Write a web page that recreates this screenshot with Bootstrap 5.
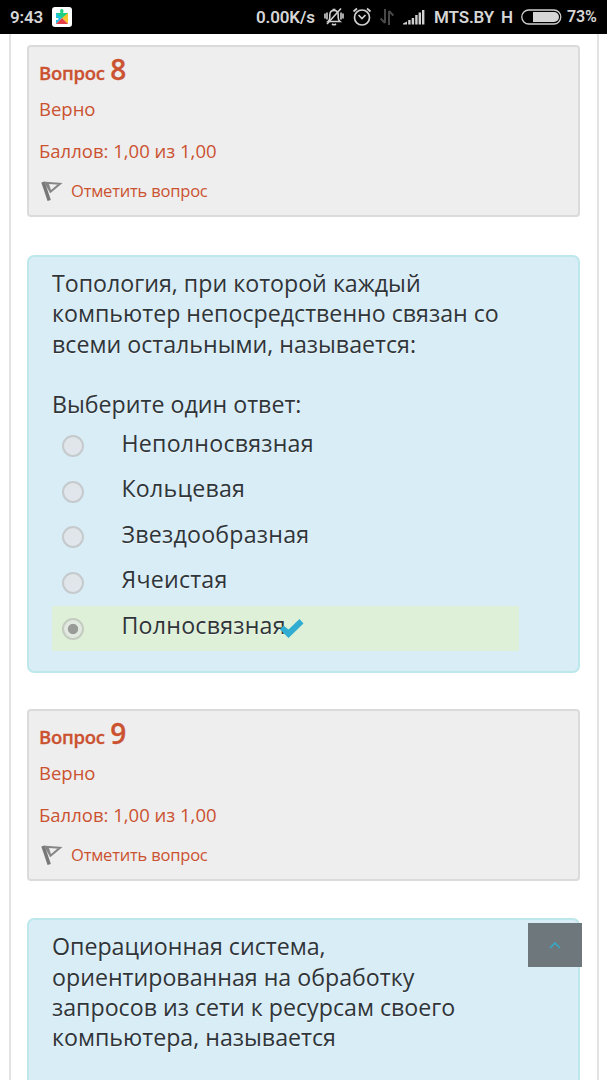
<!DOCTYPE html>
<html lang="ru">
<head>
<meta charset="utf-8">
<meta name="viewport" content="width=device-width, initial-scale=1">
<title>Тест</title>
<link href="https://cdn.jsdelivr.net/npm/bootstrap@5.3.0/dist/css/bootstrap.min.css" rel="stylesheet">
<style>
body{font-family:"Open Sans","Noto Sans",sans-serif;color:#2f3538;background:#fff;height:1080px;overflow:hidden}
.status{height:33.5px;background:#000;color:#d6d6d6;font:600 17px/34px Roboto,sans-serif;letter-spacing:-.15px;padding:0 10px}
.status span,.status svg{display:block;flex:none;white-space:nowrap}
.frame{margin:0 8px 0 9px;border:solid #e3e3e3;border-width:0 2px;padding:11.5px 17px 0 16px;height:1047px;overflow:hidden}
.info{height:172px;border:2px solid #dbdbdb;border-radius:4px;background:#eee;color:#cb5230;padding:0 10px;margin-bottom:37.5px}
.info p{margin:0;white-space:nowrap}
.num{font-weight:600;font-size:18.5px;letter-spacing:-.25px;line-height:48px;height:47.2px;padding-top:2px;-webkit-text-stroke:.3px}
.num b{font-size:28px;font-weight:600;letter-spacing:0;line-height:1;margin-left:1px}
.state{font-size:18.5px;line-height:30px}
.pts{font-size:18.5px;line-height:30px;margin-top:12px!important}
.flag{font-size:16.5px;letter-spacing:-.2px;line-height:26px;margin-top:12px!important}
.quest{border:2px solid #bce8ec;border-radius:7px;background:#d9edf7;padding:11.2px 23px 20px;font-size:23.2px;line-height:30.4px;height:418.5px;margin-bottom:35.500px;text-shadow:0 1px 0 rgba(255,255,255,.5)}
.quest p{margin:0 0 30.4px;white-space:nowrap}
.answers{width:467px;margin-top:3.8px}
.answer{height:45.6px;padding-left:10px}
.answer.right{background:#dff0d8}
.answer span{margin-left:37.5px;line-height:39.800px;height:45.6px;letter-spacing:.22px}
.answer input{appearance:none;flex:none;width:22px;height:22px;border:2px solid #c5cacd;border-radius:50%;background:linear-gradient(#dfe5e9,#e2e6ed);margin:0}
.answer input:checked{background:radial-gradient(circle,#989b98 0 4.7px,#e2e9e0 5.6px);border-color:#c4cbc1}
.check{margin-left:-6px}
.totop{position:fixed;left:528px;top:923px;width:54px;height:44px;background:#6e777b}
</style>
</head>
<body>
<header class="status d-flex align-items-center">
  <span id="clock" style="width:42px">9:43</span>
  <svg width="20" height="20" viewBox="0 0 20 20"><rect width="20" height="20" rx="3" fill="#fff"/><path d="M4 6h4.500L8 4.200q0-2.200 1.800-2.200t1.800 2.200L11 6h5v5H4z" fill="#1ed083"/><path d="M4 6l6 5-6 6v-4q2.500.3 2.500-1.500T4 10z" fill="#22bfe8"/><path d="M16 6l-6 5 6 6z" fill="#f8c52b"/><path d="M10 11l6 6H4z" fill="#e63e45"/></svg>
  <span id="speed" style="margin-left:184px;width:68px">0.00K/s</span>
  <svg width="20" height="20" viewBox="0 0 20 20" fill="none" stroke="#d0d0d0" stroke-width="1.600"><path d="M4 14.500h12q-1.800-1.500-1.800-4V8q0-4.500-4.200-4.500T5.800 8v2.500q0 2.500-1.800 4z"/><path d="M8 17q2 1.500 4 0M3 17L17 1.500M1 6.500v5M3 5.500v7M17 5.500v7M19 6.500v5M8.500 2.500h3"/></svg>
  <svg class="ms-2" width="20" height="20" viewBox="0 0 20 20" fill="none" stroke="#d0d0d0" stroke-width="1.700"><circle cx="10" cy="10.500" r="7.500"/><path d="M6.500 8l3.500 3.500L13.500 8M1.500 4.500L5 1.500M18.500 4.500L15 1.500"/></svg>
  <svg style="margin-left:8px" width="14" height="16" viewBox="0 0 14 16" fill="none" stroke="#484848" stroke-width="2"><path d="M5 0v14M.6 9.500L5 14M9 16V2M13.400 6.500L9 2"/></svg>
  <svg style="margin-left:9px" width="22" height="16" viewBox="0 0 22 16" fill="#d0d0d0"><path d="M0 15.500v-1l4-2v3zM5.200 11h2.400v4.500H5.200zM8.700 9h2.400v6.500H8.700zM12.200 6h2.400v9.500h-2.400zM15.600 3.500H18v12h-2.400zM19 1h2.400v14.500H19z"/></svg>
  <span id="net" style="margin-left:9px;width:67px">MTS.BY</span>
  <span style="width:20px">H</span>
  <svg width="41" height="16" viewBox="0 0 41 16"><rect x=".8" y="1" width="39" height="14" rx="7" fill="none" stroke="#d0d0d0" stroke-width="1.300"/><path d="M12 3h21a5 5 0 0 1 0 10H12z" fill="#d6d6d6"/></svg>
  <span id="bat" style="margin-left:5px;font-size:16px">73%</span>
</header>

<main class="frame">
  <section class="info">
    <p class="num">Вопрос <b>8</b></p>
    <p class="state">Верно</p>
    <p class="pts">Баллов: 1,00 из 1,00</p>
    <p class="flag d-flex align-items-center"><svg class="flex-shrink-0" width="32" height="24" viewBox="0 0 32 24" fill="none"><path d="M4 3l6.200 18.500" stroke="#777" stroke-width="3.500"/><path d="M6.500 3.800l14.500 1-9.500 8zM8.500 3.500l3 9.500" stroke="#858585" stroke-width="2"/></svg><span>Отметить вопрос</span></p>
  </section>
  <section class="quest">
    <p>Топология, при которой каждый<br>компьютер непосредственно связан со<br>всеми остальными, называется:</p>
    <div>Выберите один ответ:</div>
    <div class="answers">
      <label class="answer d-flex align-items-center"><input type="radio" name="q8"><span>Неполносвязная</span></label>
      <label class="answer d-flex align-items-center"><input type="radio" name="q8"><span>Кольцевая</span></label>
      <label class="answer d-flex align-items-center"><input type="radio" name="q8"><span>Звездообразная</span></label>
      <label class="answer d-flex align-items-center"><input type="radio" name="q8"><span>Ячеистая</span></label>
      <label class="answer right d-flex align-items-center"><input type="radio" name="q8" checked><span>Полносвязная</span><svg class="check" width="24" height="20" viewBox="0 0 24 20"><path d="M0 10.500l3.500-4 5 4L19.500 0 23.500 4.500 8.500 19z" fill="#30add1"/></svg></label>
    </div>
  </section>
  <section class="info">
    <p class="num">Вопрос <b>9</b></p>
    <p class="state">Верно</p>
    <p class="pts">Баллов: 1,00 из 1,00</p>
    <p class="flag d-flex align-items-center"><svg class="flex-shrink-0" width="32" height="24" viewBox="0 0 32 24" fill="none"><path d="M4 3l6.200 18.500" stroke="#777" stroke-width="3.500"/><path d="M6.500 3.800l14.500 1-9.500 8zM8.500 3.500l3 9.500" stroke="#858585" stroke-width="2"/></svg><span>Отметить вопрос</span></p>
  </section>
  <section class="quest">
    <p>Операционная система,<br>ориентированная на обработку<br>запросов из сети к ресурсам своего<br>компьютера, называется</p>
  </section>
</main>
<a class="totop d-flex align-items-center justify-content-center" href="#" aria-label="Наверх"><svg width="12" height="8" viewBox="0 0 12 8" fill="none" stroke="#35a9c6" stroke-width="1.600"><path d="M1 7l5-5 5 5"/></svg></a>
<script src="https://cdn.jsdelivr.net/npm/bootstrap@5.3.0/dist/js/bootstrap.bundle.min.js"></script>
</body>
</html>
